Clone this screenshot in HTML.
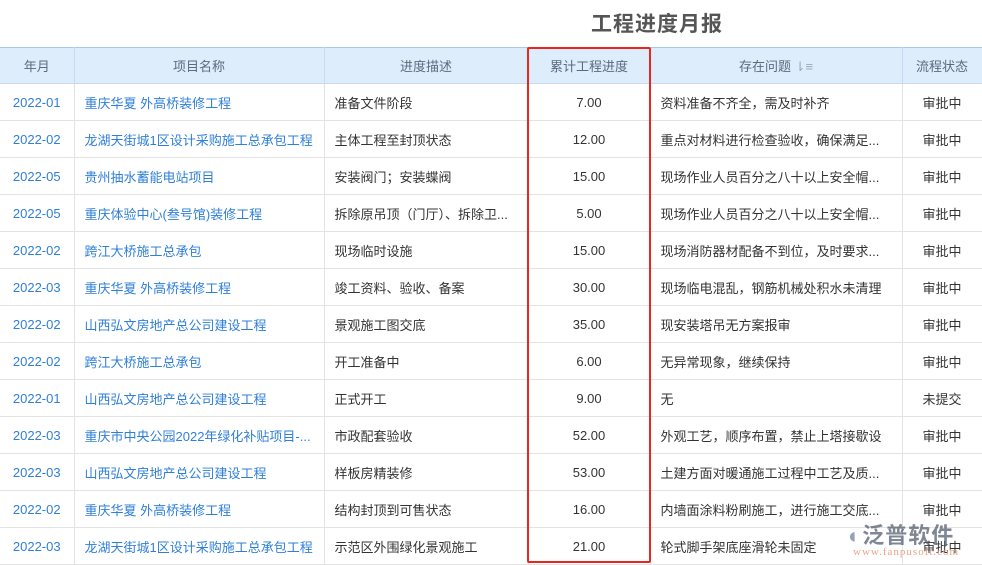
<!DOCTYPE html><html><head><meta charset="utf-8"><style>
body{margin:0;width:982px;height:565px;overflow:hidden;background:#fff;font-family:"Liberation Sans","Noto Sans CJK SC",sans-serif;font-size:13px;position:relative}
.title{position:absolute;left:591px;top:8px;font-size:21px;font-weight:bold;color:#555;letter-spacing:1px}
table{position:absolute;top:47px;left:0;border-collapse:collapse;table-layout:fixed;width:982px}
th{height:35px;padding:0;background:#deedfb;color:#5a6a80;font-weight:normal;border-top:1px solid #a9c9ec;border-right:1px solid #c4dbf2;border-bottom:1px solid #c4dbf2}
td{height:36px;border-right:1px solid #e3e3e3;border-bottom:1px solid #e3e3e3;color:#333;padding:0 10px;white-space:nowrap;overflow:hidden}
td:nth-child(1){color:#2f7fd8;text-align:center;padding:0}
td:nth-child(2){color:#2f7fd8}
td:nth-child(4),td:nth-child(6){text-align:center}
.red{position:absolute;left:527px;top:47px;width:120px;height:512px;border:2px solid #e8281f;border-radius:2px}
.logo{position:absolute;left:848px;top:518px;color:#4a5568;opacity:.7;font-size:22px;font-weight:bold;letter-spacing:1px}
.url{position:absolute;left:853px;top:546px;color:#e49a7f;font-size:11px;font-family:"Liberation Serif",serif;letter-spacing:1px;opacity:.9}
</style></head><body>
<div class="title">工程进度月报</div>
<table>
<colgroup><col style="width:74px"><col style="width:250px"><col style="width:204px"><col style="width:122px"><col style="width:252px"><col style="width:80px"></colgroup>
<tr><th>年月</th><th>项目名称</th><th>进度描述</th><th>累计工程进度</th><th>存在问题 <span style="color:#9ab">⇂≡</span></th><th>流程状态</th></tr>
<tr><td>2022-01</td><td>重庆华夏 外高桥装修工程</td><td>准备文件阶段</td><td>7.00</td><td>资料准备不齐全，需及时补齐</td><td>审批中</td></tr>
<tr><td>2022-02</td><td>龙湖天街城1区设计采购施工总承包工程</td><td>主体工程至封顶状态</td><td>12.00</td><td>重点对材料进行检查验收，确保满足...</td><td>审批中</td></tr>
<tr><td>2022-05</td><td>贵州抽水蓄能电站项目</td><td>安装阀门；安装蝶阀</td><td>15.00</td><td>现场作业人员百分之八十以上安全帽...</td><td>审批中</td></tr>
<tr><td>2022-05</td><td>重庆体验中心(叁号馆)装修工程</td><td>拆除原吊顶（门厅）、拆除卫...</td><td>5.00</td><td>现场作业人员百分之八十以上安全帽...</td><td>审批中</td></tr>
<tr><td>2022-02</td><td>跨江大桥施工总承包</td><td>现场临时设施</td><td>15.00</td><td>现场消防器材配备不到位，及时要求...</td><td>审批中</td></tr>
<tr><td>2022-03</td><td>重庆华夏 外高桥装修工程</td><td>竣工资料、验收、备案</td><td>30.00</td><td>现场临电混乱，钢筋机械处积水未清理</td><td>审批中</td></tr>
<tr><td>2022-02</td><td>山西弘文房地产总公司建设工程</td><td>景观施工图交底</td><td>35.00</td><td>现安装塔吊无方案报审</td><td>审批中</td></tr>
<tr><td>2022-02</td><td>跨江大桥施工总承包</td><td>开工准备中</td><td>6.00</td><td>无异常现象，继续保持</td><td>审批中</td></tr>
<tr><td>2022-01</td><td>山西弘文房地产总公司建设工程</td><td>正式开工</td><td>9.00</td><td>无</td><td>未提交</td></tr>
<tr><td>2022-03</td><td>重庆市中央公园2022年绿化补贴项目-...</td><td>市政配套验收</td><td>52.00</td><td>外观工艺，顺序布置，禁止上塔接歇设</td><td>审批中</td></tr>
<tr><td>2022-03</td><td>山西弘文房地产总公司建设工程</td><td>样板房精装修</td><td>53.00</td><td>土建方面对暖通施工过程中工艺及质...</td><td>审批中</td></tr>
<tr><td>2022-02</td><td>重庆华夏 外高桥装修工程</td><td>结构封顶到可售状态</td><td>16.00</td><td>内墙面涂料粉刷施工，进行施工交底...</td><td>审批中</td></tr>
<tr><td>2022-03</td><td>龙湖天街城1区设计采购施工总承包工程</td><td>示范区外围绿化景观施工</td><td>21.00</td><td>轮式脚手架底座滑轮未固定</td><td>审批中</td></tr>
</table>
<div class="red"></div>
<div class="logo"><span style="color:#6b7a99">◐</span>泛普软件</div>
<div class="url">www.fanpusoft.com</div>
</body></html>
